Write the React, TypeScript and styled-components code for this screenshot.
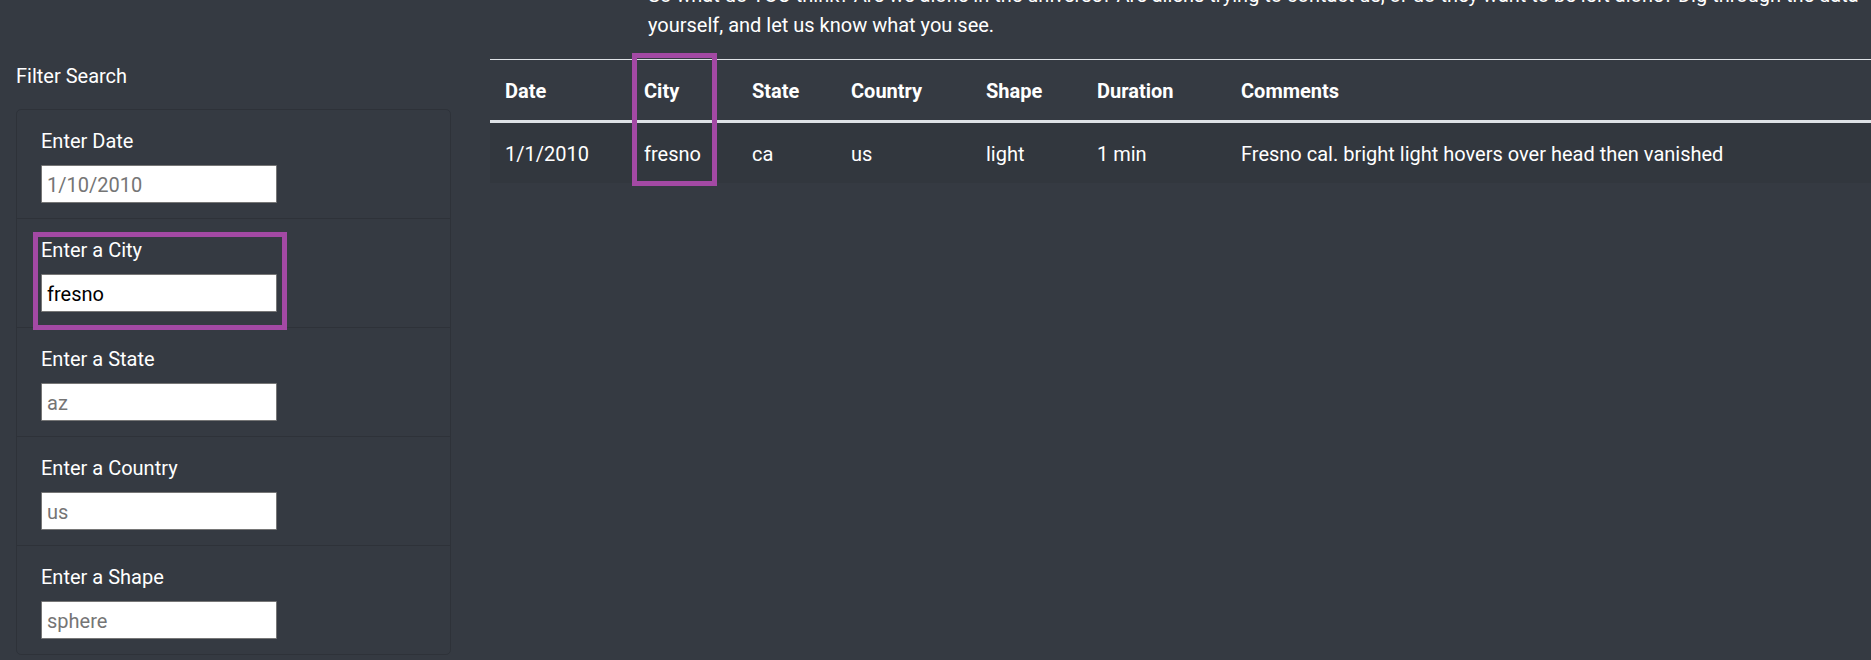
import React from 'react';
import styled, { createGlobalStyle } from 'styled-components';

interface Sighting {
  datetime: string;
  city: string;
  state: string;
  country: string;
  shape: string;
  durationMinutes: string;
  comments: string;
}

interface Filter {
  id: string;
  label: string;
  placeholder: string;
  value?: string;
  highlighted?: boolean;
}

const filters: Filter[] = [
  { id: 'datetime', label: 'Enter Date', placeholder: '1/10/2010' },
  { id: 'city', label: 'Enter a City', placeholder: 'los angeles', value: 'fresno', highlighted: true },
  { id: 'state', label: 'Enter a State', placeholder: 'az' },
  { id: 'country', label: 'Enter a Country', placeholder: 'us' },
  { id: 'shape', label: 'Enter a Shape', placeholder: 'sphere' },
];

const columns = [
  { title: 'Date', width: 139 },
  { title: 'City', width: 108 },
  { title: 'State', width: 99 },
  { title: 'Country', width: 135 },
  { title: 'Shape', width: 111 },
  { title: 'Duration', width: 144 },
  { title: 'Comments' },
];

const sightings: Sighting[] = [
  {
    datetime: '1/1/2010',
    city: 'fresno',
    state: 'ca',
    country: 'us',
    shape: 'light',
    durationMinutes: '1 min',
    comments: 'Fresno cal. bright light hovers over head then vanished',
  },
];

const App: React.FC = () => {
  return (
    <>
      <GlobalStyle />
      <Page>
        <Sidebar>
          <SidebarTitle>Filter Search</SidebarTitle>
          <FilterCard>
            {filters.map((filter) => (
              <FilterItem key={filter.id}>
                <FilterLabel htmlFor={filter.id}>{filter.label}</FilterLabel>
                <FilterInput
                  id={filter.id}
                  type="text"
                  placeholder={filter.placeholder}
                  defaultValue={filter.value}
                />
                {filter.highlighted && <SidebarMark />}
              </FilterItem>
            ))}
          </FilterCard>
        </Sidebar>

        <Main>
          <Intro>
            So what do YOU think? Are we alone in the universe? Are aliens trying to contact us, or do they
            want to be left alone? Dig through the data
            <br />
            yourself, and let us know what you see.
          </Intro>

          <TableWrap>
            <Table>
              <thead>
                <tr>
                  {columns.map((col) => (
                    <HeadCell key={col.title} style={col.width ? { width: col.width } : undefined}>
                      {col.title}
                    </HeadCell>
                  ))}
                </tr>
              </thead>
              <tbody>
                {sightings.map((s, i) => (
                  <Row key={i}>
                    <Cell>{s.datetime}</Cell>
                    <Cell>{s.city}</Cell>
                    <Cell>{s.state}</Cell>
                    <Cell>{s.country}</Cell>
                    <Cell>{s.shape}</Cell>
                    <Cell>{s.durationMinutes}</Cell>
                    <Cell>{s.comments}</Cell>
                  </Row>
                ))}
              </tbody>
            </Table>
            <ColumnMark />
          </TableWrap>
        </Main>
      </Page>
    </>
  );
};

const GlobalStyle = createGlobalStyle`
  html, body {
    margin: 0;
    padding: 0;
    background: #353a42;
    overflow: hidden;
  }

  body {
    font-family: "Segoe UI", Roboto, "Liberation Sans", sans-serif;
    font-size: 20px;
    line-height: 30px;
    color: #ffffff;
  }

  * {
    box-sizing: border-box;
  }
`;

const Page = styled.div`
  display: grid;
  grid-template-columns: 435px 1fr;
  column-gap: 39px;
  padding-left: 16px;
  height: 660px;
  background: #353a42;
`;

const Sidebar = styled.aside`
  display: flex;
  flex-direction: column;
  padding-top: 60px;
`;

const SidebarTitle = styled.div`
  height: 30px;
  padding-top: 1px;
  margin-bottom: 19px;
`;

const FilterCard = styled.div`
  display: flex;
  flex-direction: column;
  border: 1px solid rgba(0, 0, 0, 0.125);
  border-radius: 5px;
`;

const FilterItem = styled.div`
  position: relative;
  display: flex;
  flex-direction: column;
  align-items: flex-start;
  padding: 15px 24px;
  border-bottom: 1px solid rgba(0, 0, 0, 0.125);

  &:last-child {
    border-bottom: none;
  }
`;

const FilterLabel = styled.label`
  display: block;
  height: 30px;
  padding-top: 1px;
  margin-bottom: 10px;
`;

const FilterInput = styled.input`
  width: 236px;
  height: 38px;
  padding: 1px 5px 0;
  border: 1px solid #767676;
  border-radius: 1px;
  background: #ffffff;
  color: #000000;
  font-family: inherit;
  font-size: 20px;

  &::placeholder {
    color: #757575;
  }
`;

const SidebarMark = styled.div`
  position: absolute;
  left: 16px;
  top: 13px;
  width: 254px;
  height: 98px;
  border: 5px solid #a349a4;
  pointer-events: none;
`;

const Main = styled.main`
  display: flex;
  flex-direction: column;
  min-width: 0;
  margin-top: -21px;
`;

const Intro = styled.p`
  margin: 0 0 20px;
  padding-left: 158px;
  padding-top: 1px;
  height: 60px;
  white-space: nowrap;
`;

const TableWrap = styled.div`
  position: relative;
`;

const Table = styled.table`
  width: 100%;
  border-collapse: collapse;
  color: #ffffff;
`;

const HeadCell = styled.th`
  padding: 16px 15px 14px;
  text-align: left;
  vertical-align: bottom;
  font-weight: 700;
  border-top: 1px solid #dee2e6;
  border-bottom: 3px solid #dee2e6;
`;

const Row = styled.tr`
  background: rgba(0, 0, 0, 0.05);
`;

const Cell = styled.td`
  padding: 16px 15px 14px;
  vertical-align: top;
  white-space: nowrap;
`;

const ColumnMark = styled.div`
  position: absolute;
  left: 142px;
  top: -6px;
  width: 85px;
  height: 133px;
  border: 5px solid #a349a4;
  pointer-events: none;
`;

export default App;
